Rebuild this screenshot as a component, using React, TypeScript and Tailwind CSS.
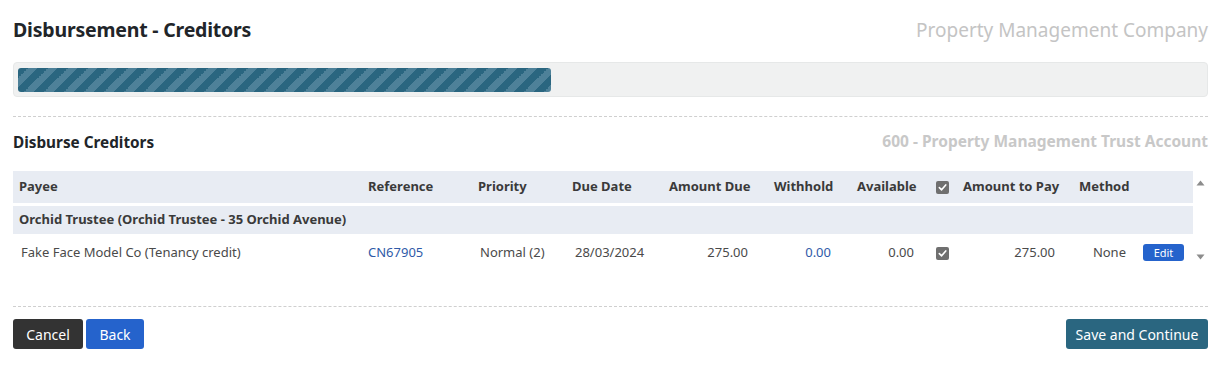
import React from "react";

function Check() {
  return (
    <span className="inline-flex w-[13px] h-[13px] items-center justify-center rounded-[2px] bg-[#6f6f6f] align-middle">
      <svg width="9" height="9" viewBox="0 0 10 10">
        <path d="M1.5 5.2 L4 7.6 L8.6 2.2" fill="none" stroke="#fff" strokeWidth="1.8" strokeLinecap="round" strokeLinejoin="round" />
      </svg>
    </span>
  );
}

function App() {
  return (
    <div className="w-[1226px] h-[370px] bg-white pl-[13px] pr-[18px] pt-[16px] text-[#212529] font-['Noto_Sans',sans-serif] overflow-hidden">
      <div className="flex items-center justify-between h-[28px]">
        <h1 className="text-[19.5px] font-bold tracking-[-0.2px]">Disbursement - Creditors</h1>
        <div className="text-[19px] text-[#c4c4c4]">Property Management Company</div>
      </div>

      <div className="mt-[18px] h-[35px] rounded-[4px] bg-[#f0f1f1] border border-[#e6e8e8] px-[4px] py-[5px]">
        <div className="h-[24px] w-[533px] rounded-[3px] bg-[linear-gradient(-45deg,#4e8199_25%,#2a6680_25%,#2a6680_50%,#4e8199_50%,#4e8199_75%,#2a6680_75%)] bg-[length:20px_20px]" />
      </div>

      <div className="mt-[19px] border-t border-dashed border-[#cfcfcf]" />

      <div className="flex items-center justify-between mt-[14px] h-[22px]">
        <h2 className="text-[15.3px] font-bold">Disburse Creditors</h2>
        <div className="text-[15.5px] font-bold text-[#c8c8c8]">600 - Property Management Trust Account</div>
      </div>

      <div className="flex mt-[18px]">
        <table className="w-[1180px] table-fixed border-collapse text-[13px]">
          <colgroup>
            <col className="w-[349px]" />
            <col className="w-[110px]" />
            <col className="w-[94px]" />
            <col className="w-[97px]" />
            <col className="w-[105px]" />
            <col className="w-[83px]" />
            <col className="w-[79px]" />
            <col className="w-[27px]" />
            <col className="w-[116px]" />
            <col className="w-[62px]" />
            <col className="w-[58px]" />
          </colgroup>
          <thead>
            <tr className="bg-[#e8ecf3] h-[32px] text-left font-bold text-[#3a3a3a]">
              <th className="pl-[6px]">Payee</th>
              <th className="pl-[6px]">Reference</th>
              <th className="pl-[6px]">Priority</th>
              <th className="pl-[6px]">Due Date</th>
              <th className="pl-[6px]">Amount Due</th>
              <th className="pl-[6px]">Withhold</th>
              <th className="pl-[6px]">Available</th>
              <th className="pl-[6px]"><Check /></th>
              <th className="pl-[6px]">Amount to Pay</th>
              <th className="pl-[6px]">Method</th>
              <th></th>
            </tr>
          </thead>
          <tbody>
            <tr className="h-[3px]"><td colSpan={11}></td></tr>
            <tr className="bg-[#e8ecf3] h-[28px]">
              <td colSpan={11} className="pl-[6px] font-bold text-[#3a3a3a]">
                Orchid Trustee (Orchid Trustee - 35 Orchid Avenue)
              </td>
            </tr>
            <tr className="h-[38px] text-[#4a4a4a]">
              <td className="pl-[8px]">Fake Face Model Co (Tenancy credit)</td>
              <td className="pl-[6px] text-[#2f5aa8]">CN67905</td>
              <td className="pl-[8px]">Normal (2)</td>
              <td className="pl-[9px]">28/03/2024</td>
              <td className="pr-[20px] text-right">275.00</td>
              <td className="pr-[20px] text-right text-[#2f5aa8]">0.00</td>
              <td className="pr-[16px] text-right">0.00</td>
              <td className="pl-[6px]"><Check /></td>
              <td className="pr-[18px] text-right">275.00</td>
              <td className="pr-[9px] text-right">None</td>
              <td className="pl-[8px]">
                <button className="h-[17px] w-[41px] rounded-[3px] bg-[#2563cc] text-white text-[11px] leading-[17px]">
                  Edit
                </button>
              </td>
            </tr>
          </tbody>
        </table>
        <div className="flex flex-col justify-between items-center w-[15px] pt-[9px] pb-[12px]">
          <svg width="9" height="6" viewBox="0 0 9 6"><path d="M4.5 0.5 L8.5 5.5 L0.5 5.5 Z" fill="#8c8c8c" /></svg>
          <svg width="9" height="6" viewBox="0 0 9 6"><path d="M0.5 0.5 L8.5 0.5 L4.5 5.5 Z" fill="#8c8c8c" /></svg>
        </div>
      </div>

      <div className="mt-[34px] border-t border-dashed border-[#cfcfcf]" />

      <div className="flex items-center justify-between mt-[12px]">
        <div className="flex gap-[3px]">
          <button className="h-[30px] w-[70px] rounded-[3px] bg-[#333333] text-white text-[14px]">Cancel</button>
          <button className="h-[30px] w-[58px] rounded-[3px] bg-[#2563cc] text-white text-[14px]">Back</button>
        </div>
        <button className="h-[30px] w-[142px] rounded-[3px] bg-[#2a6680] text-white text-[14px]">Save and Continue</button>
      </div>
    </div>
  );
}

export default App;
